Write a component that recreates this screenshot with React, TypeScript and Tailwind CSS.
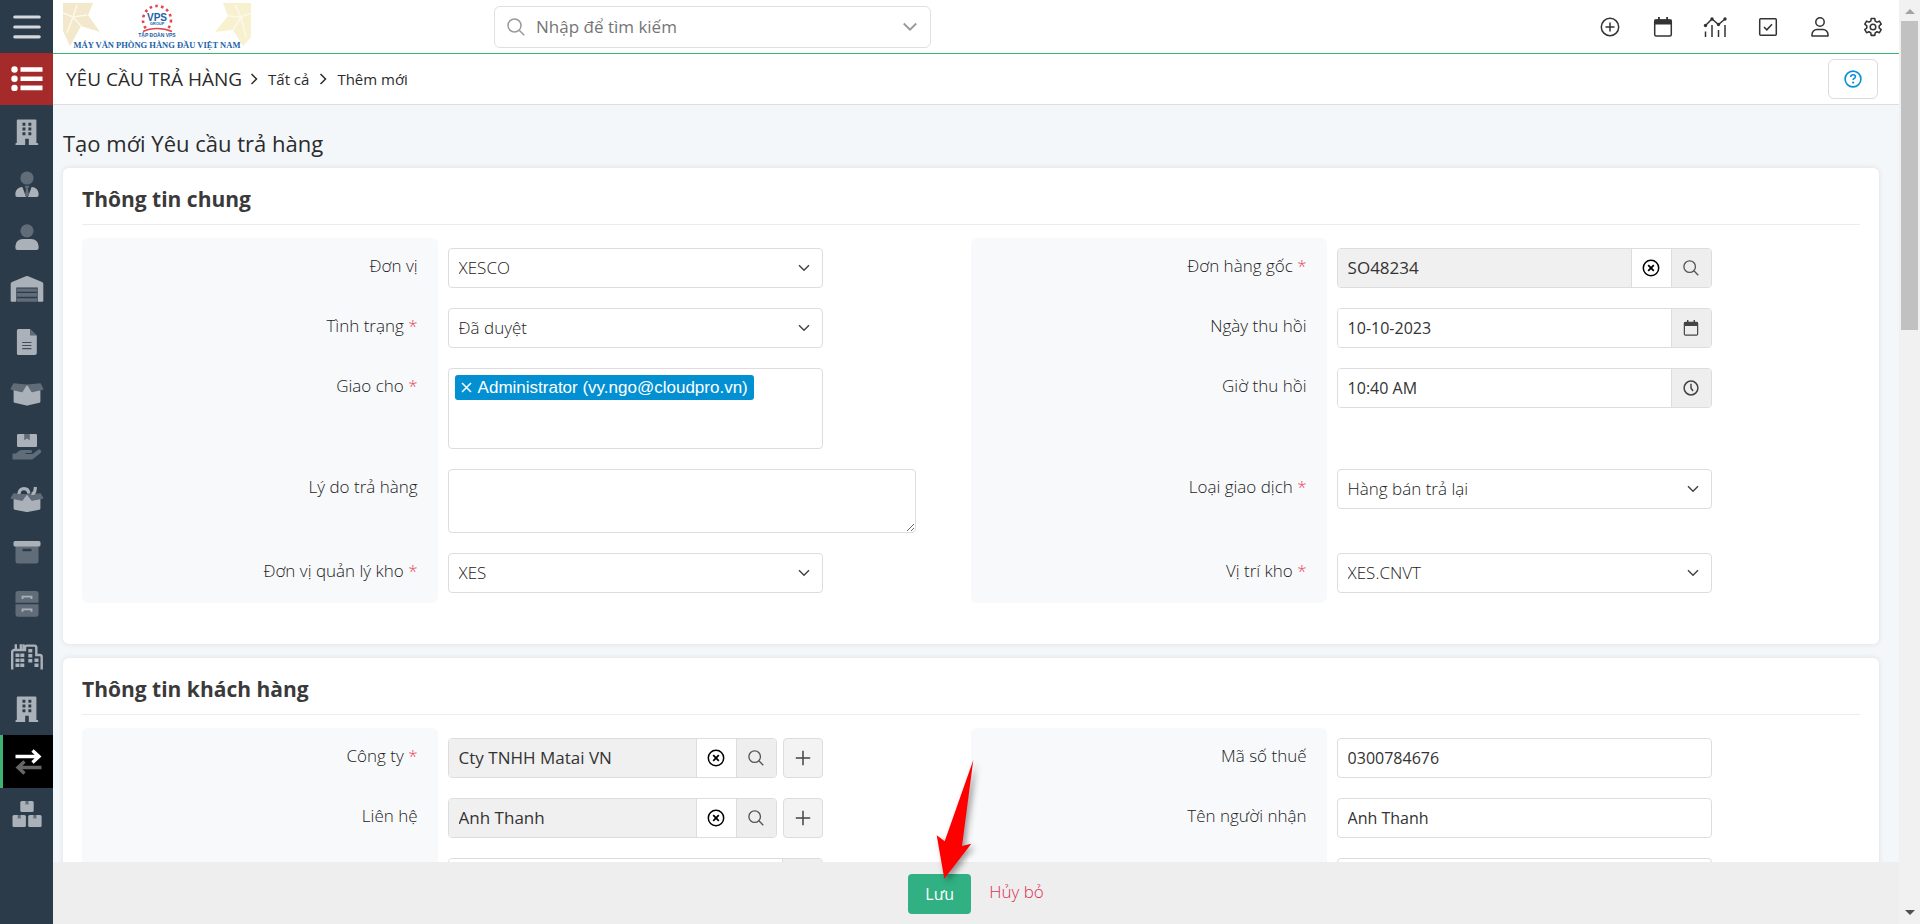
import React from "react";

const LIGHT = "#abb1b9";
const DIM = "#606c78";

function SideIcon({ children }: { children: React.ReactNode }) {
  return (
    <svg viewBox="0 0 34 28" className="h-7 w-[34px]" aria-hidden="true">
      {children}
    </svg>
  );
}

function Building() {
  return (
    <SideIcon>
      <path
        fill={LIGHT}
        fillRule="evenodd"
        d="M7.8 1.5h17.6a1 1 0 0 1 1 1V25h1a.8.8 0 0 1 .8.8V27h-9.4v-6.2h-3.6V27H5.5v-1.200a.8.8 0 0 1 .8-.8h.5V2.500a1 1 0 0 1 1-1zM12.500 4.800v2.900h2.900V4.800zM18.400 4.800v2.900h2.900V4.800zM12.500 9.600v2.900h2.900V9.600zM18.400 9.600v2.900h2.900V9.600zM12.500 14.300v2.900h2.900v-2.900zM18.400 14.300v2.900h2.900v-2.900z"
      />
    </SideIcon>
  );
}

function UserTie() {
  return (
    <SideIcon>
      <circle cx="17" cy="8" r="6.600" fill={DIM} />
      <path fill={LIGHT} d="M12.400 17 16 27H7.200a1.800 1.800 0 0 1-1.800-1.800v-1.200c0-4 3-7 7-7zM21.600 17 18 27h8.800a1.800 1.800 0 0 0 1.800-1.800v-1.200c0-4-3-7-7-7z" />
      <path fill={DIM} d="M14.500 15.800h5l-1.600 3L19 25l-2 2-2-2 1.100-6.200z" />
    </SideIcon>
  );
}

function User() {
  return (
    <SideIcon>
      <circle cx="17" cy="7.800" r="6.600" fill={DIM} />
      <path fill={LIGHT} d="M12.600 16h8.800a7.200 7.200 0 0 1 7.200 7.200V25a2 2 0 0 1-2 2H7.400a2 2 0 0 1-2-2v-1.800A7.200 7.200 0 0 1 12.600 16z" />
    </SideIcon>
  );
}

function Warehouse() {
  return (
    <SideIcon>
      <path fill={LIGHT} d="M2 7 15.800 1.300a3 3 0 0 1 2.400 0L32 7a2 2 0 0 1 1.300 1.900V26a.8.8 0 0 1-.8.8h-4a.8.8 0 0 1-.8-.8V12.400H6.300V26a.8.8 0 0 1-.8.8h-4a.8.8 0 0 1-.8-.8V8.900A2 2 0 0 1 2 7z" />
      <path fill={DIM} d="M7 13.400h20v3.400H7zM7 18.100h20v3.700H7zM7 23.200h20v3.600H7z" />
    </SideIcon>
  );
}

function FileLines() {
  return (
    <SideIcon>
      <path fill={LIGHT} d="M8.500 1h11.700v6.200h6.600V25a2 2 0 0 1-2 2H8.500a1.600 1.600 0 0 1-1.600-1.600V2.600A1.600 1.600 0 0 1 8.500 1z" />
      <path fill={DIM} d="M20.200 1l6.600 6.200h-6.600z" />
      <path stroke="#3f4e5c" strokeWidth="1.200" d="M12.200 14.500h9.200M12.200 17.500h9.200M12.200 20.600h9.200" />
    </SideIcon>
  );
}

function BoxShape() {
  return (
    <>
      <path fill={LIGHT} d="M3.600 9.500 12 11.500 17 4.500 22 11.500 30.400 9.500V21.400a1.500 1.500 0 0 1-1.100 1.400L17.500 25.600a2 2 0 0 1-1 0L4.700 22.800a1.500 1.500 0 0 1-1.100-1.400z" />
      <path fill={DIM} d="M3.400 3.300 17 4.500l-4.300 7.300a1 1 0 0 1-1.100.5L1.300 9.800a1 1 0 0 1-.6-1.300zM30.600 3.300 17 4.500l4.300 7.300a1 1 0 0 0 1.100.5l10.300-2.500a1 1 0 0 0 .6-1.300z" />
    </>
  );
}

function BoxOpen() {
  return (
    <SideIcon>
      <BoxShape />
    </SideIcon>
  );
}

function HandBox() {
  return (
    <SideIcon>
      <path fill={LIGHT} d="M8.200 1h17.600a1.200 1.200 0 0 1 1.200 1.200v10.600a1.200 1.200 0 0 1-1.200 1.200H8.200A1.200 1.200 0 0 1 7 12.800V2.200A1.200 1.200 0 0 1 8.200 1z" />
      <path fill={DIM} d="M14.200 1h5.600v6.200L17 5.500l-2.800 1.700z" />
      <path fill={DIM} d="M2.500 20.500h3.400l3-2.400a5.500 5.500 0 0 1 3.400-1.200h8.200a1.600 1.600 0 0 1 0 3.200h-5v.9h7l5.400-4.100a2 2 0 0 1 2.600 3.100l-6.800 5.500a4.500 4.500 0 0 1-2.800 1H2.500z" />
    </SideIcon>
  );
}

function BoxFull() {
  return (
    <SideIcon>
      <g transform="translate(0 5.500) scale(1 .84)">
        <BoxShape />
      </g>
      <path fill="none" stroke={LIGHT} strokeWidth="3.200" d="M9 9c0-3.600 2.300-5.400 5-5.400 3 0 4.600 2 4.800 5M21.500 8.300c2.300.6 3-.6 3.300-2.300l.7-4" />
    </SideIcon>
  );
}

function Archive() {
  return (
    <SideIcon>
      <path fill={DIM} fillRule="evenodd" d="M5.500 7.500h23V23a2.500 2.500 0 0 1-2.500 2.500H8A2.500 2.500 0 0 1 5.500 23zm7 3.200v2.600h9v-2.600z" />
      <rect x="3.500" y="3" width="27" height="5.500" rx="1.500" fill={LIGHT} />
    </SideIcon>
  );
}

function Cabinet() {
  return (
    <SideIcon>
      <path fill={DIM} d="M8 1h18a2.500 2.500 0 0 1 2.500 2.500v9.200h-23V3.500A2.500 2.500 0 0 1 8 1zM5.500 14.200h23v10A2.500 2.500 0 0 1 26 26.700H8a2.500 2.500 0 0 1-2.500-2.500z" />
      <path fill="none" stroke={LIGHT} strokeWidth="1.800" d="M12.500 9V6.600h9V9M12.500 21.800v-2.400h9v2.400" />
    </SideIcon>
  );
}

function City() {
  return (
    <SideIcon>
      <path fill="none" stroke={LIGHT} strokeWidth="2.400" d="M2.200 26.500V9a2 2 0 0 1 2-2H15V4.600a2 2 0 0 1 2-2h7.300a2 2 0 0 1 2 2V12h3.400a2 2 0 0 1 2 2v12.500M5.800 7V1.200M10.800 7V1.200M13.500 7V1.200" />
      <path stroke={LIGHT} strokeWidth="4" strokeDasharray="3.600 1.400" d="M7.500 10.500v14M12.300 10.500v14M20.300 6v14M26.500 15.500v9" />
    </SideIcon>
  );
}

function Exchange() {
  return (
    <SideIcon>
      <path fill="none" stroke="#fff" strokeWidth="3.400" d="M5.500 8.500H29M22.500 2.500l6.500 6-6.500 6" />
      <path fill="none" stroke="#666" strokeWidth="3.400" d="M31.500 19.500H8M14.500 13.500 8 19.500l6.500 6" />
    </SideIcon>
  );
}

function Boxes() {
  return (
    <SideIcon>
      <g fill={LIGHT}>
        <rect x="10.300" y="1" width="13.400" height="11" rx="1.500" />
        <rect x="2.500" y="15" width="13.400" height="12" rx="1.500" />
        <rect x="18.200" y="15" width="13.400" height="12" rx="1.500" />
      </g>
      <path fill={DIM} d="M15.500 1h3v4l-1.500-1-1.500 1zM7.700 15h3v4l-1.500-1-1.500 1zM23.400 15h3v4l-1.500-1-1.500 1z" />
    </SideIcon>
  );
}

const modules = [
  { name: "Công ty", icon: <Building /> },
  { name: "Nhân viên", icon: <UserTie /> },
  { name: "Liên hệ", icon: <User /> },
  { name: "Kho", icon: <Warehouse /> },
  { name: "Chứng từ", icon: <FileLines /> },
  { name: "Sản phẩm", icon: <BoxOpen /> },
  { name: "Giao hàng", icon: <HandBox /> },
  { name: "Đóng gói", icon: <BoxFull /> },
  { name: "Lưu trữ", icon: <Archive /> },
  { name: "Hồ sơ", icon: <Cabinet /> },
  { name: "Chi nhánh", icon: <City /> },
  { name: "Đơn vị", icon: <Building /> },
  { name: "Yêu cầu trả hàng", icon: <Exchange />, active: true },
  { name: "Tồn kho", icon: <Boxes /> },
];

function Sidebar() {
  return (
    <nav className="flex w-[53px] shrink-0 flex-col overflow-hidden bg-[#2c3b49]">
      <button aria-label="Menu" className="flex h-[53px] shrink-0 items-center justify-center">
        <svg viewBox="0 0 28 24" className="h-6 w-7">
          <path stroke="#d5d8dc" strokeWidth="3.200" strokeLinecap="round" d="M1.800 2h24.400M1.800 12h24.400M1.800 21.800h24.400" />
        </svg>
      </button>
      <button aria-label="Danh sách" className="flex h-[52px] shrink-0 items-center justify-center bg-[#a52a2a]">
        <svg viewBox="0 0 32 26" className="h-[26px] w-8">
          <path stroke="#fff" strokeWidth="4.600" d="M9.500 3.500h22M9.500 12.700h22M9.500 21.900h22" />
          <g fill="#fff">
            <circle cx="3.500" cy="3.500" r="3.200" />
            <circle cx="3.500" cy="12.700" r="3.200" />
            <circle cx="3.500" cy="21.900" r="3.200" />
          </g>
        </svg>
      </button>
      <ul>
        {modules.map((m) => (
          <li key={m.name} className="even:h-[52px] odd:h-[53px]">
            <a
              href="#"
              aria-label={m.name}
              className={
                m.active
                  ? "flex h-full items-center justify-center border-l-[3px] border-[#3cb371] bg-black pr-[3px]"
                  : "flex h-full items-center justify-center"
              }
            >
              {m.icon}
            </a>
          </li>
        ))}
      </ul>
    </nav>
  );
}

function Logo() {
  return (
    <svg viewBox="0 0 188 48" className="h-12 w-[188px]" role="img" aria-label="VPS">
      <path fill="#f3e8cc" d="M0 0h30l-5 12 12 17-19-6-11 20L0 28z" />
      <path fill="#f8f1d0" d="M188 0h-28l5 13-13 16 18-2 10 16 8-9z" />
      <path fill="none" stroke="#fcf8ec" strokeWidth="1.500" d="M10 14 14 2M10 14l14-2M10 14l8 9M10 14 4 30M10 14 0 10M178 14 172 2M178 14l-13-1M178 14l-8 13M178 14l5 20M178 14l10-4" />
      <circle cx="94" cy="17" r="14" fill="none" stroke="#e0464f" strokeWidth="2.600" strokeDasharray="2.600 3.200" />
      <path fill="#fff" d="M76 27h36v9H76z" />
      <path fill="none" stroke="#e0464f" strokeWidth="1.600" d="M80 28.500c8-4 20-4 29 0" />
      <g fontFamily="'Liberation Sans', sans-serif" fontWeight="700" textAnchor="middle" fill="#1c62a8">
        <text x="94" y="18" fontSize="10">VPS</text>
        <text x="94" y="22" fontSize="4">GROUP</text>
        <text x="94" y="34" fontSize="5">TẬP ĐOÀN VPS</text>
      </g>
      <text x="94" y="45" fontSize="8.500" fontFamily="'Liberation Serif', serif" fontWeight="700" textAnchor="middle" fill="#1c62a8">
        MÁY VĂN PHÒNG HÀNG ĐẦU VIỆT NAM
      </text>
    </svg>
  );
}

const svgLine = { fill: "none", stroke: "currentColor", strokeWidth: 1.5 };

function CalendarIcon({ className }: { className: string }) {
  return (
    <svg viewBox="0 0 20 20" className={className} aria-hidden="true">
      <rect x="1.700" y="3" width="16.600" height="16" rx="1.500" {...svgLine} />
      <path fill="currentColor" d="M1.500 2.500h17v5h-17zM5 0h1.800v3H5zM13.200 0H15v3h-1.800z" />
    </svg>
  );
}

function SearchIcon({ className }: { className: string }) {
  return (
    <svg viewBox="0 0 18 18" className={className} aria-hidden="true">
      <circle cx="7.500" cy="7.500" r="6.500" {...svgLine} />
      <path d="M12.200 12.200l5 5" {...svgLine} />
    </svg>
  );
}

function Chevron({ className }: { className: string }) {
  return (
    <svg viewBox="0 0 12 8" className={className} aria-hidden="true">
      <path d="M1 1.200l5 5 5-5" {...svgLine} />
    </svg>
  );
}

const actions = [
  {
    name: "Tạo nhanh",
    icon: (
      <svg viewBox="0 0 20 20" className="size-5">
        <circle cx="10" cy="10" r="8.700" {...svgLine} />
        <path d="M10 5.500v9M5.500 10h9" {...svgLine} />
      </svg>
    ),
  },
  { name: "Lịch", icon: <CalendarIcon className="size-5" /> },
  {
    name: "Báo cáo",
    icon: (
      <svg viewBox="0 0 24 20" className="h-5 w-6">
        <path d="M2.500 8.500l6.500-6.500 6.500 5.500L22 2M2.500 20v-5.500M9 20V8M15.500 20v-7M22 20V8" {...svgLine} />
        <g fill="currentColor">
          <circle cx="2.500" cy="8.500" r="1.700" />
          <circle cx="9" cy="2" r="1.700" />
          <circle cx="15.500" cy="7.500" r="1.700" />
          <circle cx="22" cy="2" r="1.700" />
        </g>
      </svg>
    ),
  },
  {
    name: "Công việc",
    icon: (
      <svg viewBox="0 0 20 20" className="size-5">
        <rect x="1.700" y="1.700" width="16.600" height="16.600" rx="1" {...svgLine} />
        <path d="M6 10l2.800 2.800L14 7.200" {...svgLine} />
      </svg>
    ),
  },
  {
    name: "Tài khoản",
    icon: (
      <svg viewBox="0 0 20 20" className="size-5">
        <circle cx="10" cy="5" r="4.200" {...svgLine} />
        <path d="M2 19v-1.500a5 5 0 0 1 5-5h6a5 5 0 0 1 5 5V19z" strokeLinejoin="round" {...svgLine} />
      </svg>
    ),
  },
  {
    name: "Cài đặt",
    icon: (
      <svg viewBox="0 0 20 20" className="size-5">
        <circle cx="10" cy="10" r="2.800" {...svgLine} />
        <path
          strokeLinejoin="round"
          d="M8.300 1h3.400l.4 2.400 1.700 1 2.300-.9 1.700 2.900-1.900 1.600v2l1.900 1.600-1.700 2.900-2.300-.9-1.700 1-.4 2.400H8.300l-.4-2.400-1.700-1-2.300.9-1.700-2.900L4.100 10V8L2.200 6.400l1.700-2.900 2.300.9 1.700-1z"
          transform="translate(-.5 .5) scale(1.050)"
          {...svgLine}
        />
      </svg>
    ),
  },
];

function Header() {
  return (
    <header className="flex h-[54px] shrink-0 items-center border-b border-[#3cb371] bg-white">
      <div className="w-[441px] shrink-0 pl-2.5">
        <Logo />
      </div>
      <div className="flex h-[42px] w-[437px] items-center gap-[11px] rounded-md border border-[#e0e0e0] px-3 text-[#9a9a9a]">
        <SearchIcon className="size-[18px] shrink-0" />
        <input
          aria-label="Nhập để tìm kiếm"
          placeholder="Nhập để tìm kiếm"
          className="min-w-0 flex-1 text-[17px] outline-none placeholder:text-[#757575]"
        />
        <Chevron className="h-[10px] w-4 shrink-0" />
      </div>
      <div className="ml-auto flex text-[#333]">
        {actions.map((a) => (
          <button key={a.name} aria-label={a.name} className="flex h-[53px] items-center justify-center even:w-[53px] odd:w-[52px]">
            {a.icon}
          </button>
        ))}
      </div>
    </header>
  );
}

function Crumb() {
  return (
    <svg viewBox="0 0 8 12" className="h-3 w-2" aria-hidden="true">
      <path d="M1.500 1l5 5-5 5" {...svgLine} />
    </svg>
  );
}

function Breadcrumb() {
  return (
    <div className="flex h-[51px] shrink-0 items-center border-b border-[#dedede] bg-white pr-[21px] pl-[13px] text-[#2b2b2b]">
      <h1 className="text-[19px] leading-7 font-medium">YÊU CẦU TRẢ HÀNG</h1>
      <ol className="ml-2 flex items-center gap-2.5 text-[15px]">
        <Crumb />
        <li><a href="#">Tất cả</a></li>
        <Crumb />
        <li>Thêm mới</li>
      </ol>
      <button aria-label="Trợ giúp" className="ml-auto flex h-10 w-[50px] items-center justify-center rounded-md border border-[#dcdcdc] text-[#0b8fd6]">
        <svg viewBox="0 0 18 18" className="size-[18px]">
          <circle cx="9" cy="9" r="7.900" fill="none" stroke="currentColor" strokeWidth="1.600" />
          <path d="M6.600 7c.2-1.500 1.200-2.200 2.500-2.200s2.300.8 2.300 2c0 1.600-2.300 1.700-2.300 3.200" fill="none" stroke="currentColor" strokeWidth="1.600" />
          <circle cx="9.100" cy="12.600" r="1.100" fill="currentColor" />
        </svg>
      </button>
    </div>
  );
}

function Label({ id, text, required, edge = "" }: { id: string; text: string; required?: boolean; edge?: string }) {
  return (
    <label htmlFor={id} className={`bg-[#f8f9fb] pt-4 pr-5 text-right text-[17px] leading-6 font-light text-[#222] ${edge}`}>
      {text}
      {required && <span className="text-[#e8415c]"> *</span>}
    </label>
  );
}

function Cell({ children }: { children: React.ReactNode }) {
  return <div className="p-2.5">{children}</div>;
}

function Select({ id, value }: { id: string; value: string }) {
  return (
    <div className="relative max-w-[375px]">
      <select id={id} className="h-10 w-full appearance-none rounded border border-[#ddd] bg-white px-2.5 text-[17px] font-light text-[#222]">
        <option>{value}</option>
      </select>
      <Chevron className="pointer-events-none absolute top-4 right-[13px] h-2 w-3 text-[#444]" />
    </div>
  );
}

const cellButton = "flex w-10 items-center justify-center border-l border-[#ddd]";

function ClearIcon() {
  return (
    <svg viewBox="0 0 18 18" className="size-[18px] text-black" aria-hidden="true">
      <circle cx="9" cy="9" r="7.700" {...svgLine} />
      <path d="M6.200 6.200l5.600 5.600M11.800 6.200l-5.600 5.600" fill="none" stroke="currentColor" strokeWidth="1.800" />
    </svg>
  );
}

function Lookup({ id, value, addable }: { id: string; value: string; addable?: boolean }) {
  return (
    <div className="flex max-w-[375px] gap-1.5">
      <div className="flex h-10 min-w-0 flex-1 overflow-hidden rounded border border-[#ddd]">
        <input id={id} defaultValue={value} readOnly className="min-w-0 flex-1 bg-[#f0f0f0] px-2.5 text-[17px] text-[#333]" />
        <button aria-label="Xóa" className={`${cellButton} bg-white`}>
          <ClearIcon />
        </button>
        <button aria-label="Tìm" className={`${cellButton} bg-[#eee] text-[#555]`}>
          <SearchIcon className="size-4" />
        </button>
      </div>
      {addable && (
        <button aria-label="Thêm" className="flex size-10 items-center justify-center rounded border border-[#ddd] bg-[#f3f3f3] text-[#444]">
          <svg viewBox="0 0 16 16" className="size-4">
            <path d="M8 .8v14.400M.8 8h14.400" {...svgLine} />
          </svg>
        </button>
      )}
    </div>
  );
}

function Picker({ id, value, name, icon }: { id: string; value: string; name: string; icon: React.ReactNode }) {
  return (
    <div className="flex h-10 max-w-[375px] overflow-hidden rounded border border-[#ddd]">
      <input id={id} defaultValue={value} aria-label={name} className="min-w-0 flex-1 bg-white px-2.5 text-base text-[#333]" />
      <button aria-label={`Chọn ${name}`} className={`${cellButton} bg-[#eee] text-[#444]`}>
        {icon}
      </button>
    </div>
  );
}

function TextBox({ id, value, name }: { id: string; value: string; name: string }) {
  return (
    <input
      id={id}
      defaultValue={value}
      aria-label={name}
      className="block h-10 w-full max-w-[375px] rounded border border-[#ddd] bg-white px-2.5 text-base text-[#333]"
    />
  );
}

function Card({ title, children }: { title: string; children: React.ReactNode }) {
  return (
    <section className="rounded-md bg-white px-[19px] pt-3.5 pb-[41px] shadow-[0_0_5px_1px_rgba(0,0,0,0.07)]">
      <h3 className="border-b border-[#ececec] pb-2 text-[21px] leading-[34px] font-bold text-[#3a3a3a]">{title}</h3>
      <div className="mt-[13px] grid grid-cols-[2fr_3fr_2fr_3fr]">{children}</div>
    </section>
  );
}

function ScrollTrack() {
  return (
    <div className="flex w-[21px] shrink-0 flex-col items-center bg-[#f1f1f1]" aria-hidden="true">
      <svg viewBox="0 0 10 5" className="mt-[9px] mb-[7px] h-[5px] w-2.5 shrink-0">
        <path fill="#a3a3a3" d="M0 5l5-5 5 5z" />
      </svg>
      <div className="h-[309px] w-[17px] bg-[#c1c1c1]" />
      <svg viewBox="0 0 10 5" className="mt-auto mb-[9px] h-[5px] w-2.5 shrink-0">
        <path fill="#505050" d="M0 0l5 5 5-5z" />
      </svg>
    </div>
  );
}

export default function App() {
  return (
    <div className="flex h-screen overflow-hidden bg-[#f3f7fa] font-['Open_Sans','Noto_Sans',sans-serif]">
      <Sidebar />
      <div className="flex min-w-0 flex-1 flex-col">
        <Header />
        <Breadcrumb />
        <main className="min-h-0 flex-1 overflow-y-auto pr-5 pl-2.5 [scrollbar-width:none]">
          <h2 className="pt-[23px] pb-2.5 text-[22px] leading-[30px] font-medium text-[#2b2b2b]">Tạo mới Yêu cầu trả hàng</h2>
          <div className="flex flex-col gap-3.5">
            <Card title="Thông tin chung">
              <Label id="unit" text="Đơn vị" edge="rounded-t-md" />
              <Cell><Select id="unit" value="XESCO" /></Cell>
              <Label id="order" text="Đơn hàng gốc" required edge="rounded-t-md" />
              <Cell><Lookup id="order" value="SO48234" /></Cell>

              <Label id="status" text="Tình trạng" required />
              <Cell><Select id="status" value="Đã duyệt" /></Cell>
              <Label id="date" text="Ngày thu hồi" />
              <Cell><Picker id="date" name="Ngày thu hồi" value="10-10-2023" icon={<CalendarIcon className="size-4" />} /></Cell>

              <Label id="assignee" text="Giao cho" required />
              <Cell>
                <div id="assignee" className="h-[81px] max-w-[375px] rounded border border-[#ddd] bg-white p-1.5">
                  <span className="inline-flex h-[25px] items-center gap-1.5 rounded-[3px] bg-[#0290d2] px-1.5 font-['Liberation_Sans',sans-serif] text-[17px] text-white">
                    <button aria-label="Bỏ chọn">
                      <svg viewBox="0 0 11 11" className="size-[11px]">
                        <path d="M1 1l9 9M10 1l-9 9" {...svgLine} />
                      </svg>
                    </button>
                    Administrator (vy.ngo@cloudpro.vn)
                  </span>
                </div>
              </Cell>
              <Label id="time" text="Giờ thu hồi" />
              <Cell>
                <Picker
                  id="time"
                  name="Giờ thu hồi"
                  value="10:40 AM"
                  icon={
                    <svg viewBox="0 0 16 16" className="size-4">
                      <circle cx="8" cy="8" r="6.900" {...svgLine} />
                      <path d="M8 3.800V8l2 3" {...svgLine} />
                    </svg>
                  }
                />
              </Cell>

              <Label id="reason" text="Lý do trả hàng" />
              <Cell>
                <textarea id="reason" className="block h-16 w-full max-w-[468px] resize rounded border border-[#ddd] bg-white px-2.5 py-2 text-base" />
              </Cell>
              <Label id="kind" text="Loại giao dịch" required />
              <Cell><Select id="kind" value="Hàng bán trả lại" /></Cell>

              <Label id="manager" text="Đơn vị quản lý kho" required edge="rounded-b-md" />
              <Cell><Select id="manager" value="XES" /></Cell>
              <Label id="place" text="Vị trí kho" required edge="rounded-b-md" />
              <Cell><Select id="place" value="XES.CNVT" /></Cell>
            </Card>

            <Card title="Thông tin khách hàng">
              <Label id="company" text="Công ty" required edge="rounded-t-md" />
              <Cell><Lookup id="company" value="Cty TNHH Matai VN" addable /></Cell>
              <Label id="tax" text="Mã số thuế" edge="rounded-t-md" />
              <Cell><TextBox id="tax" name="Mã số thuế" value="0300784676" /></Cell>

              <Label id="contact" text="Liên hệ" />
              <Cell><Lookup id="contact" value="Anh Thanh" addable /></Cell>
              <Label id="receiver" text="Tên người nhận" />
              <Cell><TextBox id="receiver" name="Tên người nhận" value="Anh Thanh" /></Cell>

              <Label id="address" text="" edge="rounded-b-md" />
              <Cell><Picker id="address" name="Địa chỉ" value="" icon={null} /></Cell>
              <Label id="phone" text="" edge="rounded-b-md" />
              <Cell><TextBox id="phone" name="Điện thoại" value="" /></Cell>
            </Card>
          </div>
        </main>
        <footer className="flex h-[62px] shrink-0 items-start justify-center gap-[18px] bg-[#eee] pt-3">
          <div className="relative">
            <button className="h-10 w-[63px] rounded bg-[#31b083] text-base text-white">Lưu</button>
            <svg viewBox="0 0 60 130" className="pointer-events-none absolute -top-[118px] left-6 h-[130px] w-[60px] drop-shadow-[3px_3px_3px_rgba(0,0,0,0.4)]" aria-hidden="true">
              <path fill="#f00" d="M41.300 4 12.700 85.300 4.700 79.300 12.300 122.700 39.300 87.700 30 90z" />
            </svg>
          </div>
          <a href="#" className="pt-1.5 text-[17px] leading-6 font-light text-[#dc2f52]">Hủy bỏ</a>
        </footer>
      </div>
      <ScrollTrack />
    </div>
  );
}
